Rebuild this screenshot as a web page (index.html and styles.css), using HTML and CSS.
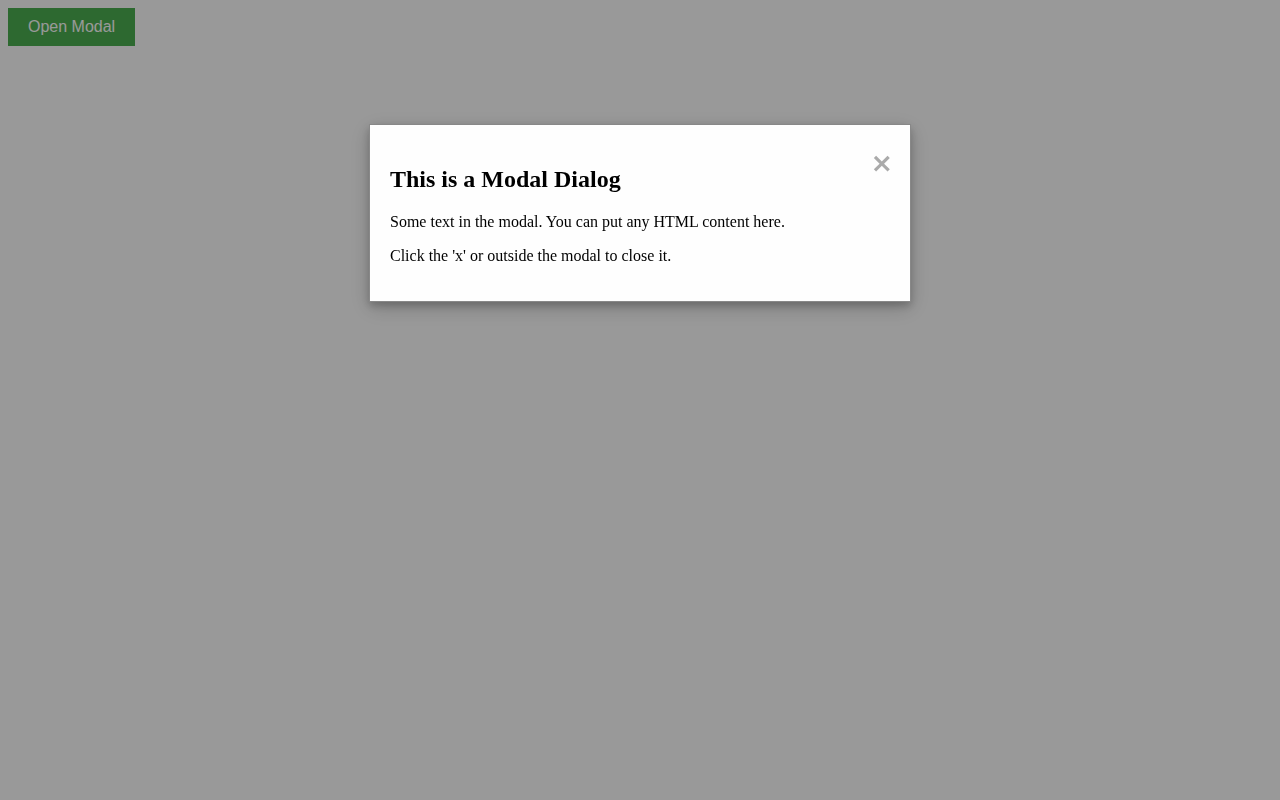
FILE: index.html
```html
<!DOCTYPE html>
<html>
<head>
<meta charset="utf-8">
<title>Modal</title>
<link rel="stylesheet" href="styles.css">
</head>
<body>
<button class="open-btn">Open Modal</button>
<div class="overlay">
  <div class="modal-content">
    <span class="close">&times;</span>
    <h2 class="modal-title">This is a Modal Dialog</h2>
    <p class="modal-text">Some text in the modal. You can put any HTML content here.</p>
    <p class="modal-text">Click the 'x' or outside the modal to close it.</p>
  </div>
</div>
</body>
</html>
```
FILE: styles.css
```css
body {
  margin: 8px;
  font-family: "Liberation Serif", "Times New Roman", serif;
  background: #fff;
}
.open-btn {
  display: block;
  background-color: #4CAF50;
  color: #fff;
  border: none;
  padding: 10px 20px;
  font-family: "Liberation Sans", Arial, sans-serif;
  font-size: 16px;
  line-height: 18px;
  margin: 0;
  cursor: pointer;
}
.overlay {
  position: fixed;
  z-index: 1;
  left: 0;
  top: 0;
  width: 100%;
  height: 100%;
  background-color: rgba(0, 0, 0, 0.4);
  padding-top: 124px;
  box-sizing: border-box;
}
.modal-content {
  background-color: #fefefe;
  margin: 0 auto;
  padding: 21px 20px 20px;
  border: 1px solid #888;
  width: 500px;
  box-shadow: 0 4px 8px 0 rgba(0, 0, 0, 0.2), 0 6px 20px 0 rgba(0, 0, 0, 0.19);
}
.close {
  color: #aaa;
  float: right;
  font-family: "DejaVu Sans", sans-serif;
  font-size: 27px;
  line-height: 33px;
  font-weight: bold;
  margin-right: -3px;
}
.modal-title {
  font-size: 24px;
  margin: 19.92px 0;
}
.modal-text {
  font-size: 16px;
  margin: 16px 0;
}
```
